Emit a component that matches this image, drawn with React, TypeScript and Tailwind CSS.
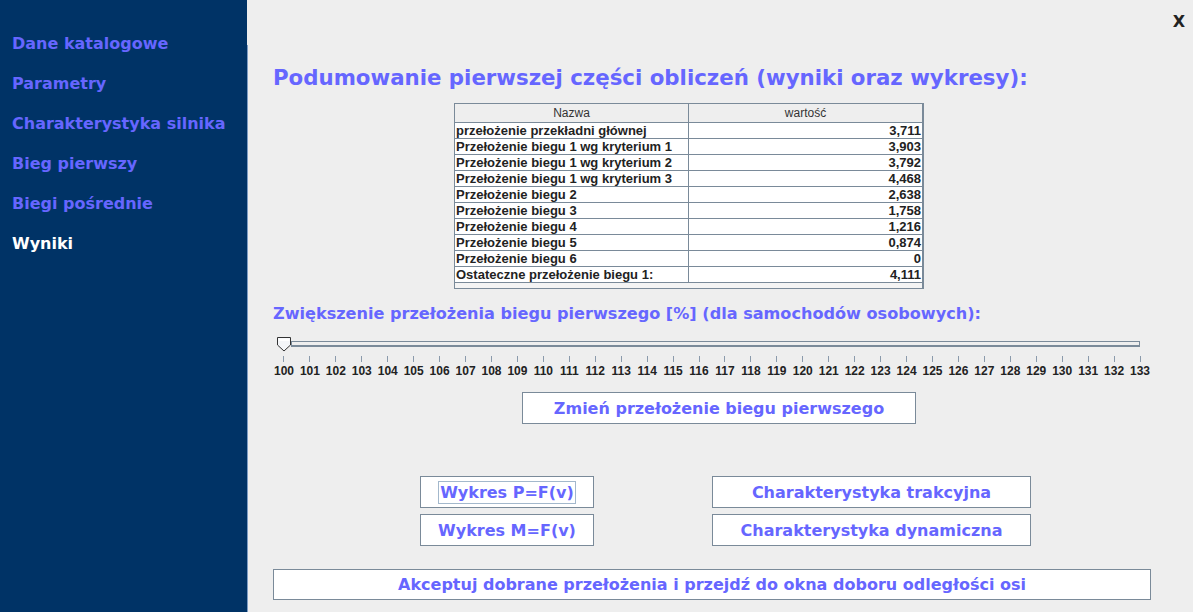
import { FC } from "react";

const navItems = [
     "Dane katalogowe",
     "Parametry",
     "Charakterystyka silnika",
     "Bieg pierwszy",
     "Biegi pośrednie",
     "Wyniki",
];

const rows: [string, string][] = [
     ["przełożenie przekładni głównej", "3,711"],
     ["Przełożenie biegu 1 wg kryterium 1", "3,903"],
     ["Przełożenie biegu 1 wg kryterium 2", "3,792"],
     ["Przełożenie biegu 1 wg kryterium 3", "4,468"],
     ["Przełożenie biegu 2", "2,638"],
     ["Przełożenie biegu 3", "1,758"],
     ["Przełożenie biegu 4", "1,216"],
     ["Przełożenie biegu 5", "0,874"],
     ["Przełożenie biegu 6", "0"],
     ["Ostateczne przełożenie biegu 1:", "4,111"],
];

const ticks = Array.from({ length: 34 }, (_, i) => 100 + i);

const sans = "font-['Liberation_Sans',Arial,sans-serif]";
const wide = "font-['DejaVu_Sans',Verdana,sans-serif]";

interface BtnProps {
     label: string;
     className?: string;
     focused?: boolean;
}

const SwingButton: FC<BtnProps> = ({ label, className, focused }) => (
     <div
          className={`flex items-center justify-center bg-white border border-[#7a8a99] text-[#6666ff] font-bold text-[16px] ${wide} ${className ?? ""}`}>
          <span
               className={
                    focused
                         ? "border border-[#a3b8cc] px-[1px] leading-[21px]"
                         : "leading-[21px]"
               }>
               {label}
          </span>
     </div>
);

const App: FC = () => {
     return (
          <div
               className={`flex w-[1193px] h-[612px] bg-[#eeeeee] overflow-hidden ${sans}`}>
               {/* sidebar */}
               <div
                    className={`w-[247px] shrink-0 bg-[#003366] pt-[34px] pl-[12px] ${wide}`}>
                    {navItems.map((item, i) => (
                         <div
                              key={item}
                              className={`h-[40px] font-bold text-[16px] leading-[20px] ${
                                   i === navItems.length - 1
                                        ? "text-white"
                                        : "text-[#6666ff]"
                              }`}>
                              {item}
                         </div>
                    ))}
               </div>

               {/* main */}
               <div className="flex-1 flex flex-col">
                    <div className="h-[45px] flex justify-end pr-[8px] pt-[12px]">
                         <span
                              className={`font-bold text-[16px] leading-[20px] text-[#222] ${wide}`}>
                              X
                         </span>
                    </div>
                    <div className="flex-1 flex flex-col border-l border-[#7d9cc4]">
                         <h1
                              className={`ml-[25px] mt-[20px] font-bold text-[21.3px] leading-[26px] text-[#6666ff] ${wide}`}>
                              Podumowanie pierwszej części obliczeń (wyniki oraz
                              wykresy):
                         </h1>

                         {/* table */}
                         <div className="ml-[206px] mt-[12px] w-[470px] border border-[#7a8a99] border-r-2 bg-[#f4f4f4]">
                              <div className="flex h-[19px] bg-[#eeeeee] border-b border-[#7a8a99] text-[12px] leading-[19px] text-[#333]">
                                   <div className="w-[234px] text-center border-r border-[#7a8a99]">
                                        Nazwa
                                   </div>
                                   <div className="flex-1 text-center">wartość</div>
                              </div>
                              {rows.map(([name, val]) => (
                                   <div
                                        key={name}
                                        className="flex h-[16px] bg-white border-b border-[#7a8a99] text-[13px] leading-[15px] font-bold text-[#222]">
                                        <div className="w-[234px] pl-[1px] border-r border-[#7a8a99] whitespace-nowrap">
                                             {name}
                                        </div>
                                        <div className="flex-1 text-right pr-[1px]">
                                             {val}
                                        </div>
                                   </div>
                              ))}
                              <div className="h-[5px]" />
                         </div>

                         <div
                              className={`ml-[25px] mt-[15px] font-bold text-[16.1px] leading-[20px] text-[#6666ff] ${wide}`}>
                              Zwiększenie przełożenia biegu pierwszego [%] (dla
                              samochodów osobowych):
                         </div>

                         {/* slider */}
                         <div className="ml-[28px] mt-[12px] w-[864px] h-[16px] flex items-center">
                              <div className="w-[15px] h-[16px] shrink-0">
                                   <svg width="16" height="16" viewBox="0 0 16 16">
                                        <path
                                             d="M1.5 1.5 H14.5 V9 L8 15 L1.5 9 Z"
                                             fill="#f4f6f9"
                                             stroke="#333"
                                             strokeWidth="1"
                                        />
                                        <path d="M2.5 2.5 H13.5 V5 H2.5 Z" fill="#fff" />
                                   </svg>
                              </div>
                              <div className="flex-1 h-[6px] border border-[#7a8a99] border-b-2 bg-[#eeeeee]" />
                         </div>
                         <div className="ml-[23px] w-[882px] grid grid-cols-[repeat(34,minmax(0,1fr))] mt-[4px]">
                              {ticks.map((t) => (
                                   <div key={t} className="flex flex-col items-center">
                                        <div className="w-px h-[6px] bg-[#8a9aab]" />
                                        <div className="mt-[2px] text-[12px] leading-[14px] font-bold text-[#222]">
                                             {t}
                                        </div>
                                   </div>
                              ))}
                         </div>

                         <SwingButton
                              label="Zmień przełożenie biegu pierwszego"
                              className="ml-[274px] mt-[14px] w-[394px] h-[32px]"
                         />

                         <div className="ml-[172px] mt-[52px] flex gap-[118px]">
                              <div className="flex flex-col gap-[6px]">
                                   <SwingButton
                                        label="Wykres P=F(v)"
                                        className="w-[174px] h-[32px]"
                                        focused
                                   />
                                   <SwingButton
                                        label="Wykres M=F(v)"
                                        className="w-[174px] h-[32px]"
                                   />
                              </div>
                              <div className="flex flex-col gap-[6px]">
                                   <SwingButton
                                        label="Charakterystyka trakcyjna"
                                        className="w-[319px] h-[32px]"
                                   />
                                   <SwingButton
                                        label="Charakterystyka dynamiczna"
                                        className="w-[319px] h-[32px]"
                                   />
                              </div>
                         </div>

                         <SwingButton
                              label="Akceptuj dobrane przełożenia i przejdź do okna doboru odległości osi"
                              className="ml-[25px] mt-[23px] w-[878px] h-[31px]"
                         />
                    </div>
               </div>
          </div>
     );
};

export default App;
